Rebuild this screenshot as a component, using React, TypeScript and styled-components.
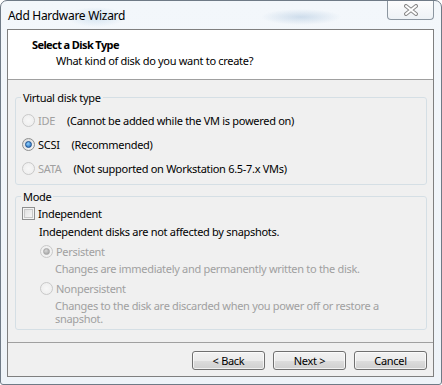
import React from 'react';
import styled, { createGlobalStyle } from 'styled-components';

const GlobalStyle = createGlobalStyle`
  html, body {
    margin: 0;
    padding: 0;
    background: #ffffff;
  }
  body {
    font-family: 'Segoe UI', 'Noto Sans', Lato, sans-serif;
    font-size: 11px;
    letter-spacing: -0.3px;
  }
`;

const Window = styled.div`
  box-sizing: border-box;
  width: 442px;
  height: 385px;
  display: flex;
  flex-direction: column;
  border: 1px solid #6f7a86;
  border-radius: 7px 7px 3px 3px;
  background:
    radial-gradient(ellipse 30px 10px at 95px 16px, rgba(150, 190, 220, 0.35), transparent),
    radial-gradient(ellipse 40px 8px at 300px 16px, rgba(120, 160, 200, 0.3), transparent),
    linear-gradient(#f3f7fb, #eef3f8);
  overflow: hidden;
`;

const TitleBar = styled.div`
  height: 28px;
  display: flex;
  align-items: flex-start;
  justify-content: space-between;
`;

const Title = styled.div`
  padding: 7px 0 0 7px;
  font-size: 12px;
  line-height: 15px;
  color: #000;
`;

const CloseButton = styled.div`
  box-sizing: border-box;
  width: 47px;
  height: 20px;
  margin: -1px 7px 0 0;
  border: 1px solid #8c96a0;
  border-top: none;
  border-radius: 0 0 4px 4px;
  background: linear-gradient(#fdfdfd, #eef2f6);
  display: flex;
  align-items: center;
  justify-content: center;
`;

const Client = styled.div`
  flex: 1;
  margin: 0 7px 7px 6px;
  border: 1px solid #7f7f7f;
  background: #f0f0f0;
  display: flex;
  flex-direction: column;
`;

const Header = styled.div`
  height: 50px;
  background: #ffffff;
  border-bottom: 1px solid #a0a0a0;
  box-sizing: border-box;
  padding: 7px 0 0 24px;
`;

const HeaderTitle = styled.div`
  font-weight: bold;
  letter-spacing: -0.6px;
  line-height: 15px;
  color: #000;
`;

const HeaderSub = styled.div`
  margin: 1px 0 0 24px;
  line-height: 15px;
  color: #000;
`;

const Body = styled.div`
  flex: 1;
  padding: 10px 6px 0 7px;
  display: flex;
  flex-direction: column;
  gap: 4px;
`;

const Group = styled.fieldset`
  margin: 0;
  padding: 0 0 4px 6px;
  border: 1px solid #d5dfe5;
  border-radius: 3px;
  min-width: 0;
`;

const Legend = styled.legend`
  margin-left: -1px;
  padding: 0 2px;
  line-height: 15px;
  color: #000;
`;

const Row = styled.div<{ $h: number; $indent?: number }>`
  height: ${(p) => p.$h}px;
  padding-left: ${(p) => p.$indent ?? 0}px;
  display: flex;
  align-items: center;
  gap: 3px;
  line-height: 15px;
`;

const Label = styled.span<{ $disabled?: boolean }>`
  color: ${(p) => (p.$disabled ? '#a0a0a0' : '#000')};
`;

const Note = styled.span`
  margin-left: 9px;
  color: #000;
`;

const Radio = styled.span<{ $checked?: boolean; $disabled?: boolean }>`
  box-sizing: border-box;
  width: 13px;
  height: 13px;
  flex: none;
  border-radius: 50%;
  border: 1px solid ${(p) => (p.$disabled ? '#c9c9c9' : '#8e8f8f')};
  background: ${(p) => (p.$disabled ? 'radial-gradient(#f7f7f7, #ececec)' : 'radial-gradient(circle at 60% 65%, #fdfdfd, #d3d3d3)')};
  display: flex;
  align-items: center;
  justify-content: center;

  &::after {
    content: '';
    display: ${(p) => (p.$checked ? 'block' : 'none')};
    width: 5px;
    height: 5px;
    border-radius: 50%;
    background: ${(p) => (p.$disabled ? 'radial-gradient(circle at 40% 35%, #d8d8d8, #9a9a9a)' : 'radial-gradient(circle at 40% 35%, #8fd2ff, #1b5fb0)')};
    border: 1px solid ${(p) => (p.$disabled ? '#a8a8a8' : '#1a4f90')};
  }
`;

const CheckBox = styled.span`
  box-sizing: border-box;
  width: 13px;
  height: 13px;
  flex: none;
  border: 1px solid #8e8f8f;
  background: linear-gradient(135deg, #dcdcdc, #fbfbfb);
  box-shadow: inset 0 0 0 1px #f4f4f4, inset 0 0 0 2px #c8c8c8;
`;

const Text = styled.div<{ $indent: number; $disabled?: boolean; $lh: number; $width?: number }>`
  padding-left: ${(p) => p.$indent}px;
  line-height: ${(p) => p.$lh}px;
  color: ${(p) => (p.$disabled ? '#a0a0a0' : '#000')};
  width: ${(p) => (p.$width ? `${p.$width}px` : 'auto')};
`;

const Footer = styled.div`
  height: 34px;
  box-sizing: border-box;
  border-top: 1px solid #a0a0a0;
  padding: 8px 6px 0 0;
  display: flex;
  justify-content: flex-end;
  align-items: flex-start;
  gap: 8px;
`;

const Button = styled.button`
  box-sizing: border-box;
  width: 73px;
  height: 19px;
  padding: 0;
  font: inherit;
  letter-spacing: inherit;
  line-height: 15px;
  color: #000;
  border: 1px solid #707070;
  border-radius: 3px;
  background: linear-gradient(#f2f2f2 0%, #ebebeb 50%, #dddddd 51%, #cfcfcf 100%);
  box-shadow: inset 0 0 0 1px rgba(255, 255, 255, 0.7);
`;

function CloseGlyph () {
  const d = 'M2 2 L12 10 M12 2 L2 10';
  return (
    <svg width='14' height='12' viewBox='0 0 14 12'>
      <path d={d} stroke='#8a8a8a' strokeWidth='4' strokeLinecap='round' fill='none' />
      <path d={d} stroke='#ffffff' strokeWidth='2' strokeLinecap='round' fill='none' />
    </svg>
  );
}

export default function App () {
  return (
    <>
      <GlobalStyle />
      <Window>
        <TitleBar>
          <Title>Add Hardware Wizard</Title>
          <CloseButton><CloseGlyph /></CloseButton>
        </TitleBar>
        <Client>
          <Header>
            <HeaderTitle>Select a Disk Type</HeaderTitle>
            <HeaderSub>What kind of disk do you want to create?</HeaderSub>
          </Header>
          <Body>
            <Group>
              <Legend>Virtual disk type</Legend>
              <Row $h={3} />
              <Row $h={24}>
                <Radio $disabled />
                <Label $disabled>IDE</Label>
                <Note>(Cannot be added while the VM is powered on)</Note>
              </Row>
              <Row $h={24}>
                <Radio $checked />
                <Label>SCSI</Label>
                <Note>(Recommended)</Note>
              </Row>
              <Row $h={24}>
                <Radio $disabled />
                <Label $disabled>SATA</Label>
                <Note>(Not supported on Workstation 6.5-7.x VMs)</Note>
              </Row>
            </Group>
            <Group>
              <Legend>Mode</Legend>
              <Row $h={19}>
                <CheckBox />
                <Label>Independent</Label>
              </Row>
              <Text $indent={17} $lh={18}>Independent disks are not affected by snapshots.</Text>
              <Row $h={20} $indent={18}>
                <Radio $checked $disabled />
                <Label $disabled>Persistent</Label>
              </Row>
              <Text $indent={33} $lh={16} $disabled>Changes are immediately and permanently written to the disk.</Text>
              <Row $h={22} $indent={18}>
                <Radio $disabled />
                <Label $disabled>Nonpersistent</Label>
              </Row>
              <Text $indent={33} $lh={13} $disabled $width={345}>
                Changes to the disk are discarded when you power off or restore a snapshot.
              </Text>
            </Group>
          </Body>
          <Footer>
            <Button>&lt; Back</Button>
            <Button>Next &gt;</Button>
            <Button>Cancel</Button>
          </Footer>
        </Client>
      </Window>
    </>
  );
}
